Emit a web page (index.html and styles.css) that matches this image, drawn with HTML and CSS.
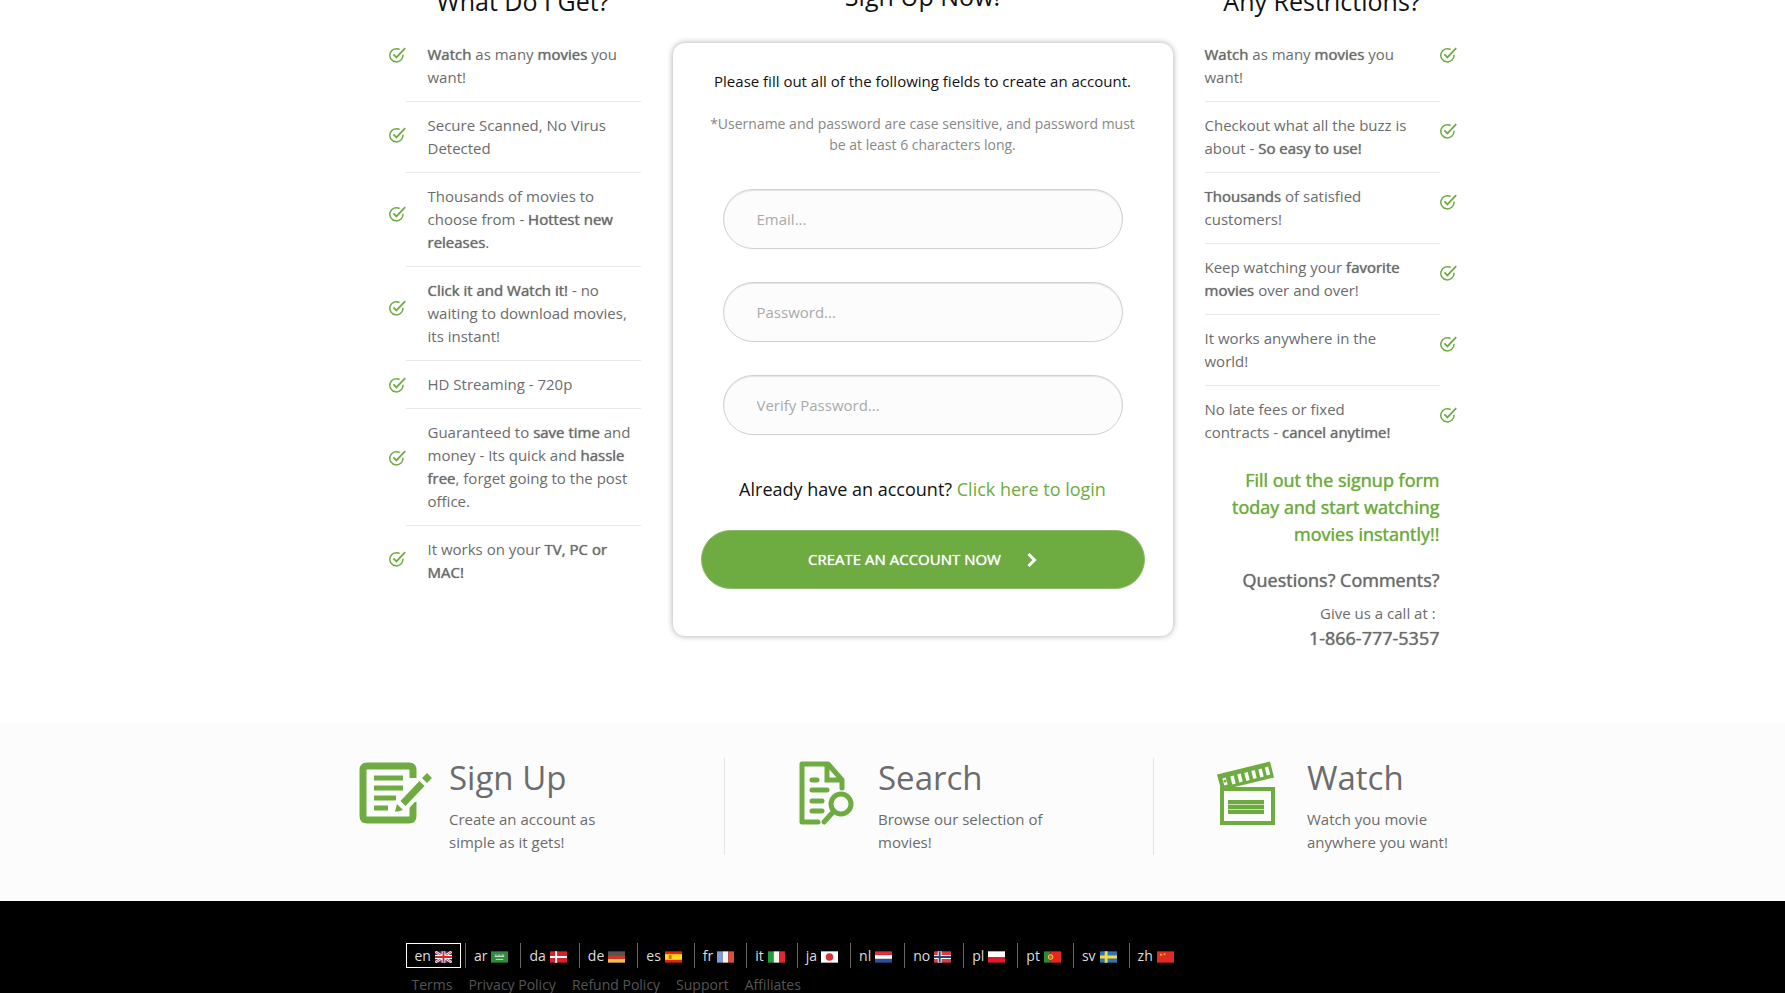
FILE: index.html
```html
<!DOCTYPE html>
<html lang="en">
<head>
    <meta charset="UTF-8">
    <meta name="viewport" content="width=device-width, initial-scale=1.0">
    <title>Sign Up Now!</title>
    <link rel="stylesheet" href="styles.css">
</head>
<body>
    <!-- shared icons -->
    <svg class="sprite" width="0" height="0" aria-hidden="true">
        <symbol id="check" viewBox="0 0 17 17">
            <path d="M10.6 2.5A6.6 6.6 0 1 0 14 7.8" fill="none" stroke="currentColor" stroke-width="1.5"/>
            <path d="M4.4 7.4l3 3L16.2 1.2" fill="none" stroke="currentColor" stroke-width="1.8"/>
        </symbol>
    </svg>

    <main class="container signup">
        <section class="column">
            <h2>What Do I Get?</h2>
            <ul class="perks perks-left">
                <li><svg class="tick"><use href="#check"/></svg><b>Watch</b> as many <b>movies</b> you want!</li>
                <li><svg class="tick"><use href="#check"/></svg>Secure Scanned, No Virus Detected</li>
                <li><svg class="tick"><use href="#check"/></svg>Thousands of movies to choose from - <b>Hottest new releases</b>.</li>
                <li><svg class="tick"><use href="#check"/></svg><b>Click it and Watch it!</b> - no waiting to download movies, its instant!</li>
                <li><svg class="tick"><use href="#check"/></svg>HD Streaming - 720p</li>
                <li><svg class="tick"><use href="#check"/></svg>Guaranteed to <b>save time</b> and money - Its quick and <b>hassle free</b>, forget going to the post office.</li>
                <li><svg class="tick"><use href="#check"/></svg>It works on your <b>TV, PC or MAC!</b></li>
            </ul>
        </section>

        <section class="column column-form">
            <h2>Sign Up Now!</h2>
            <form class="panel">
                <p class="lead">Please fill out all of the following fields to create an account.</p>
                <p class="hint">*Username and password are case sensitive, and password must be at least 6 characters long.</p>
                <div class="fields">
                    <input type="email" name="email" placeholder="Email..." aria-label="Email">
                    <input type="password" name="password" placeholder="Password..." aria-label="Password">
                    <input type="password" name="verify" placeholder="Verify Password..." aria-label="Verify Password">
                </div>
                <p class="login">Already have an account? <a href="#">Click here to login</a></p>
                <button type="submit" class="btn">
                    Create an account now
                    <svg width="10" height="16" viewBox="0 0 10 16"><path d="M1.5 2l6 6-6 6" fill="none" stroke="currentColor" stroke-width="3"/></svg>
                </button>
            </form>
        </section>

        <section class="column">
            <h2>Any Restrictions?</h2>
            <ul class="perks perks-right">
                <li><svg class="tick"><use href="#check"/></svg><b>Watch</b> as many <b>movies</b> you want!</li>
                <li><svg class="tick"><use href="#check"/></svg>Checkout what all the buzz is about - <b>So easy to use!</b></li>
                <li><svg class="tick"><use href="#check"/></svg><b>Thousands</b> of satisfied customers!</li>
                <li><svg class="tick"><use href="#check"/></svg>Keep watching your <b>favorite movies</b> over and over!</li>
                <li><svg class="tick"><use href="#check"/></svg>It works anywhere in the world!</li>
                <li><svg class="tick"><use href="#check"/></svg>No late fees or fixed contracts - <b>cancel anytime!</b></li>
            </ul>
            <div class="contact">
                <p class="callout">Fill out the signup form today and start watching movies instantly!!</p>
                <p class="question">Questions? Comments?</p>
                <p class="call">Give us a call at :&nbsp;</p>
                <p class="phone">1-866-777-5357</p>
            </div>
        </section>
    </main>

    <section class="features">
        <div class="features-row">
            <div class="feature">
                <svg class="feature-icon" viewBox="-5 0 80 66">
                    <path d="M56 18V10q0-4-4-4H10q-4 0-4 4v46q0 4 4 4h42q4 0 4-4V42" fill="none" stroke="currentColor" stroke-width="7"/>
                    <path d="M17 18h29M17 28h29M17 38h22M17 48h14" stroke="currentColor" stroke-width="5"/>
                    <path d="M39 51L73 15" stroke="#fcfcfc" stroke-width="15"/>
                    <path d="M46 43.500L65 23.500M67.500 20.500l5-5" stroke="currentColor" stroke-width="7"/>
                    <path d="M40 44l6 6-5 1.500h-3z" fill="currentColor"/>
                </svg>
                <div>
                    <h3>Sign Up</h3>
                    <p>Create an account as simple as it gets!</p>
                </div>
            </div>
            <div class="feature">
                <svg class="feature-icon" viewBox="0 0 80 66">
                    <path d="M37 62H21V4h26l14 16v8" fill="none" stroke="currentColor" stroke-width="5" stroke-linecap="round" stroke-linejoin="round"/>
                    <path d="M46 4v16h15" fill="none" stroke="currentColor" stroke-width="5"/>
                    <path d="M31 20h5M31 30h15M31 41h10M31 51h10" stroke="currentColor" stroke-width="5" stroke-linecap="round"/>
                    <circle cx="60" cy="44" r="10" fill="#fcfcfc" stroke="currentColor" stroke-width="5"/>
                    <path d="M53 51L43 62" stroke="currentColor" stroke-width="5" stroke-linecap="round"/>
                </svg>
                <div>
                    <h3>Search</h3>
                    <p>Browse our selection of movies!</p>
                </div>
            </div>
            <div class="feature">
                <svg class="feature-icon" viewBox="0 0 80 66">
                    <path d="M12 29h51v34H12z" fill="none" stroke="currentColor" stroke-width="4"/>
                    <path d="M18 42h36M18 47h36M18 52h36" stroke="currentColor" stroke-width="4"/>
                    <path d="M18 40h36v14H18z" fill="currentColor" opacity=".35"/>
                    <path d="M7 14.500L60 1.500l4 16-50 12h-3z" fill="currentColor"/>
                    <path d="M14 18l2 7M22 16l2 8M29 14l2 8M36 12.500l2 8M43 10.500l2 8M50 9l2 8M56.500 7l2 8" stroke="#fcfcfc" stroke-width="3.500"/>
                    <circle cx="15" cy="21" r="1.500" fill="currentColor"/>
                </svg>
                <div>
                    <h3>Watch</h3>
                    <p>Watch you movie anywhere you want!</p>
                </div>
            </div>
        </div>
    </section>

    <footer>
        <div class="container">
            <ul class="languages">
                <li class="active"><a href="#">en <svg class="flag" viewBox="0 0 18 12"><path fill="#2b3f88" d="M0 0h18v12H0z"/><path d="M0 0l18 12M18 0L0 12" stroke="#fff" stroke-width="2.500"/><path d="M0 0l18 12M18 0L0 12" stroke="#d33" stroke-width="1"/><path d="M9 0v12M0 6h18" stroke="#fff" stroke-width="4"/><path d="M9 0v12M0 6h18" stroke="#d22" stroke-width="2"/></svg></a></li>
                <li><a href="#">ar <svg class="flag" viewBox="0 0 18 12"><path fill="#2f8a3c" d="M0 0h18v12H0z"/><path d="M4 4h2M7 4h3M11 4h3M4 5.500h10" stroke="#d5ead7"/><path d="M5 8.500h8" stroke="#d5ead7"/></svg></a></li>
                <li><a href="#">da <svg class="flag" viewBox="0 0 18 12"><path fill="#d9202f" d="M0 0h18v12H0z"/><path d="M6.500 0v12M0 6h18" stroke="#fff" stroke-width="2"/></svg></a></li>
                <li><a href="#">de <svg class="flag" viewBox="0 0 18 12"><path fill="#555" d="M0 0h18v4H0z"/><path fill="#d63325" d="M0 4h18v4H0z"/><path fill="#f5bd52" d="M0 8h18v4H0z"/></svg></a></li>
                <li><a href="#">es <svg class="flag" viewBox="0 0 18 12"><path fill="#e2231a" d="M0 0h18v12H0z"/><path fill="#ffd91c" d="M0 3h18v6H0z"/><path fill="#c9711c" d="M4 4h3v4H4z"/></svg></a></li>
                <li><a href="#">fr <svg class="flag" viewBox="0 0 18 12"><path fill="#7f9bd8" d="M0 0h6v12H0z"/><path fill="#f4f4f4" d="M6 0h6v12H6z"/><path fill="#e24b41" d="M12 0h6v12h-6z"/></svg></a></li>
                <li><a href="#">it <svg class="flag" viewBox="0 0 18 12"><path fill="#279a3c" d="M0 0h6v12H0z"/><path fill="#f4f4f4" d="M6 0h6v12H6z"/><path fill="#dd2a30" d="M12 0h6v12h-6z"/></svg></a></li>
                <li><a href="#">ja <svg class="flag" viewBox="0 0 18 12"><path fill="#fff" d="M0 0h18v12H0z"/><circle cx="9" cy="6" r="4" fill="#dc3038"/></svg></a></li>
                <li><a href="#">nl <svg class="flag" viewBox="0 0 18 12"><path fill="#d8323a" d="M0 0h18v4H0z"/><path fill="#fff" d="M0 4h18v4H0z"/><path fill="#2c4e9c" d="M0 8h18v4H0z"/></svg></a></li>
                <li><a href="#">no <svg class="flag" viewBox="0 0 18 12"><path fill="#da3a45" d="M0 0h18v12H0z"/><path d="M6 0v12M0 6h18" stroke="#fff" stroke-width="4"/><path d="M6 0v12M0 6h18" stroke="#2a3f80" stroke-width="2"/></svg></a></li>
                <li><a href="#">pl <svg class="flag" viewBox="0 0 18 12"><path fill="#fff" d="M0 0h18v6H0z"/><path fill="#e01a2b" d="M0 6h18v6H0z"/></svg></a></li>
                <li><a href="#">pt <svg class="flag" viewBox="0 0 18 12"><path fill="#2e8636" d="M0 0h7v12H0z"/><path fill="#e2281f" d="M7 0h11v12H7z"/><circle cx="7" cy="6" r="2.500" fill="#e6532c" stroke="#f0d748"/></svg></a></li>
                <li><a href="#">sv <svg class="flag" viewBox="0 0 18 12"><path fill="#2f74b6" d="M0 0h18v12H0z"/><path d="M6.500 0v12M0 6h18" stroke="#f5dc3a" stroke-width="3"/></svg></a></li>
                <li><a href="#">zh <svg class="flag" viewBox="0 0 18 12"><path fill="#e02a22" d="M0 0h18v12H0z"/><path d="M4 2l2 3-3-2h3L3 5z" fill="#f7d232"/><circle cx="8" cy="3" r="1" fill="#f7b832"/></svg></a></li>
            </ul>
            <nav class="links">
                <a href="#">Terms</a>
                <a href="#">Privacy Policy</a>
                <a href="#">Refund Policy</a>
                <a href="#">Support</a>
                <a href="#">Affiliates</a>
            </nav>
        </div>
    </footer>
</body>
</html>
```
FILE: styles.css
```css
* {
    box-sizing: border-box;
}
body {
    margin: 0;
    min-height: 100vh;
    display: flex;
    flex-direction: column;
    font-family: "Open Sans", sans-serif;
    font-size: 15px;
    line-height: 23px;
    color: #6c6c6c;
    background: #fff;
}
h2, h3, p, ul {
    margin: 0;
    padding: 0;
    font-weight: normal;
}
ul { list-style: none; }
a { text-decoration: none; }
.sprite { position: absolute; }

.container {
    width: 100%;
    max-width: 1094px;
    margin: 0 auto;
    padding-left: 60px;
}

/* sign up */
.signup {
    display: grid;
    grid-template-columns: 235px 1fr 235px;
    margin-top: -16px;
    padding-bottom: 71px;
}
.column h2 {
    height: 48px;
    font-size: 25px;
    line-height: 34px;
    text-align: center;
    color: #111;
}
.column-form {
    margin: 0 32px;
}
.column-form h2 {
    height: 59px;
    line-height: 24px;
}
b, .callout, .question, .phone {
    font-weight: normal;
    text-shadow: 0 0 1px currentColor;
}
.perks li {
    position: relative;
    padding: 12px 0;
    border-bottom: 1px solid #e8e8e8;
}
.perks li:first-child { padding-top: 11px; }
.perks li:last-child { border-bottom: 0; }
.perks-left li { padding-left: 22px; }
.perks-right li { padding-right: 28px; }
.tick {
    position: absolute;
    width: 17px;
    height: 17px;
    color: #6eab40;
}
.perks-left .tick { top: 35%; right: 100%; }
.perks-right .tick { top: 30%; left: 100%; }
.perks li:first-child .tick { top: 15px; }

.panel {
    padding: 27px 28px 47px;
    text-align: center;
    border-radius: 12px;
    box-shadow: 0 0 6px rgba(0, 0, 0, 0.35);
}
.lead {
    color: #111;
}
.hint {
    margin-top: 20px;
    font-size: 14px;
    line-height: 21px;
    color: #888;
}
.fields {
    display: flex;
    flex-direction: column;
    gap: 33px;
    padding: 34px 22px 0;
}
.fields input {
    width: 100%;
    height: 60px;
    padding: 0 33px;
    font: inherit;
    color: #666;
    background: #fcfcfc;
    border: 1px solid #d0d0d0;
    border-radius: 30px;
    box-shadow: inset 0 1px 1px rgba(0, 0, 0, 0.1);
}
.fields input::placeholder { color: #aaa; }
.login {
    margin: 42px 0 28px;
    font-size: 18px;
    line-height: 25px;
    color: #111;
}
.login a { color: #6eab40; }
.btn {
    display: flex;
    align-items: center;
    justify-content: center;
    gap: 26px;
    width: 100%;
    height: 59px;
    font: inherit;
    text-transform: uppercase;
    text-shadow: 0 0 1px currentColor;
    color: #fff;
    background: #6eab40;
    border: 1px solid #8dba6a;
    border-radius: 30px;
    cursor: pointer;
}

.contact {
    padding-top: 11px;
    text-align: right;
}
.callout, .question, .phone {
    font-size: 18px;
    line-height: 27px;
}
.callout { color: #6eab40; }
.question { margin: 19px 0 8px; }

/* features */
.features {
    padding: 35px 0 46px;
    background: #fcfcfc;
}
.features-row {
    display: grid;
    grid-template-columns: repeat(3, 1fr);
    max-width: 1381px;
    margin: 0 auto;
    padding-left: 94px;
}
.feature {
    display: flex;
    gap: 17px;
    height: 97px;
    padding: 0 100px 0 56px;
    border-right: 1px solid #e4e4e4;
}
.feature:last-child { border-right: 0; }
.feature-icon {
    flex: none;
    width: 80px;
    height: 66px;
    margin-top: 2px;
    color: #6eab40;
}
.feature h3 {
    font-size: 33px;
    line-height: 40px;
    margin-bottom: 10px;
}

/* footer */
footer {
    flex: 1;
    padding-top: 42px;
    background: #000;
}
.languages {
    display: flex;
    gap: 4px;
}
.languages a {
    display: flex;
    align-items: center;
    gap: 4px;
    height: 25px;
    padding: 0 8px;
    font-size: 14px;
    color: #ddd;
    border-left: 1px solid #666;
}
.languages .active a { border: 1px solid #fff; }
.flag {
    width: 17px;
    height: 12px;
    margin-top: 2px;
}
.links {
    display: flex;
    gap: 16px;
    padding: 6px 6px 0;
    font-size: 14px;
    line-height: 21px;
}
.links a { color: #555; }
```
